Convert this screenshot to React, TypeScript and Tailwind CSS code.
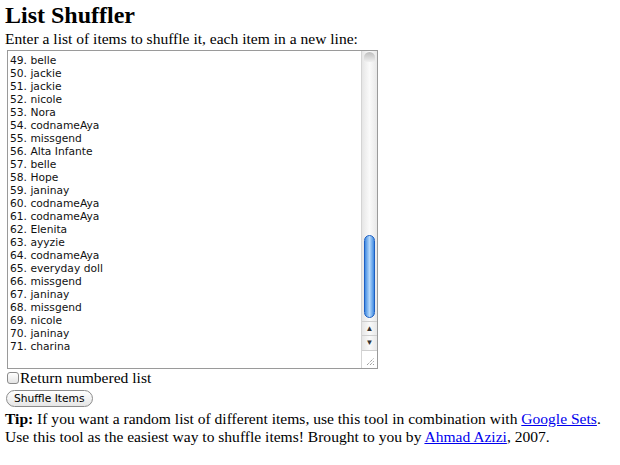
const items = [
  "49. belle",
  "50. jackie",
  "51. jackie",
  "52. nicole",
  "53. Nora",
  "54. codnameAya",
  "55. missgend",
  "56. Alta Infante",
  "57. belle",
  "58. Hope",
  "59. janinay",
  "60. codnameAya",
  "61. codnameAya",
  "62. Elenita",
  "63. ayyzie",
  "64. codnameAya",
  "65. everyday doll",
  "66. missgend",
  "67. janinay",
  "68. missgend",
  "69. nicole",
  "70. janinay",
  "71. charina",
];

function Scrollbar() {
  return (
    <div className="flex flex-col w-[16px] border-l border-[#d4d4d4] bg-gradient-to-r from-[#e6e6e6] via-[#fafafa] to-[#e8e8e8]">
      <div className="h-[10px] mx-[2px] mt-[1px] rounded-t-full bg-gradient-to-b from-[#bdbdbd] to-[#f0f0f0]" />
      <div className="flex-1 flex flex-col justify-end">
        <div className="mx-[2px] h-[83px] rounded-full border border-[#1d5fc2] bg-gradient-to-r from-[#3f8ae0] via-[#b5d9fb] to-[#3f8ae0]" />
      </div>
      <div className="h-[14px] mt-[3px] border-t border-[#cfcfcf] flex items-center justify-center text-[8px] leading-none text-[#333]">▲</div>
      <div className="h-[15px] border-t border-[#cfcfcf] flex items-center justify-center text-[8px] leading-none text-[#333]">▼</div>
      <div className="h-[18px] border-t border-[#cfcfcf] bg-white flex items-end justify-end p-[2px]">
        <svg width="9" height="9" viewBox="0 0 9 9">
          <path d="M1 8 L8 1 M4 8 L8 4 M7 8 L8 7" stroke="#777" strokeWidth="1" strokeDasharray="1 1" />
        </svg>
      </div>
    </div>
  );
}

export default function App() {
  return (
    <div className="bg-white w-[620px] h-[465px] px-[5px] pt-[1px] text-black font-['Liberation_Serif',serif]">
      <h1 className="text-[24px] font-bold leading-[28px]">List Shuffler</h1>
      <p className="text-[15.55px] leading-[18px] mt-[1px]">Enter a list of items to shuffle it, each item in a new line:</p>

      <div className="ml-[2px] mt-[2px] w-[371px] h-[319px] border border-[#9a9a9a] flex">
        <div className="flex-1 pl-[2px] pt-[3px] font-['DejaVu_Sans',sans-serif] text-[10.7px] leading-[13px] text-[#111]">
          {items.map((item, i) => (
            <div key={i}>{item}</div>
          ))}
        </div>
        <Scrollbar />
      </div>

      <label className="flex items-center text-[15.55px] leading-[18px]">
        <span className="w-[12px] h-[12px] ml-[2px] mr-[1px] rounded-[3px] border border-[#8a8a8a] bg-gradient-to-b from-white to-[#e4e4e4]" />
        Return numbered list
      </label>

      <div className="flex mt-[3px]">
        <button className="ml-[1px] h-[17px] px-[7px] rounded-full border border-[#8c8c8c] bg-gradient-to-b from-white to-[#e6e6e6] font-['DejaVu_Sans',sans-serif] text-[10.7px] leading-[15px]">
          Shuffle Items
        </button>
      </div>

      <p className="text-[15.55px] leading-[18px] mt-[3px]">
        <b>Tip:</b> If you want a random list of different items, use this tool in combination with{" "}
        <a href="#" className="text-[#0000ee] underline">Google Sets</a>.<br />
        Use this tool as the easiest way to shuffle items! Brought to you by{" "}
        <a href="#" className="text-[#0000ee] underline">Ahmad Azizi</a>, 2007.
      </p>
    </div>
  );
}
